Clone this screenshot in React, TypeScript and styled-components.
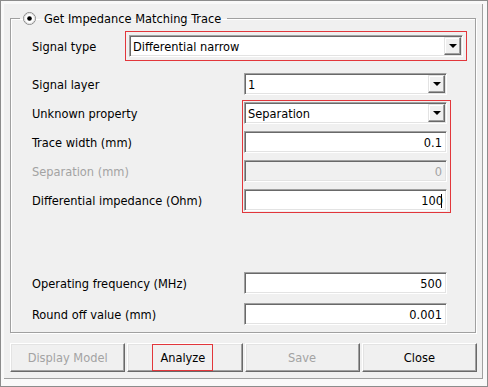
import { Fragment } from "react"
import { createGlobalStyle, styled } from "styled-components"

const GlobalStyle = createGlobalStyle`
  body {
    margin: 0;
    background: #fff;
    font-family: "DejaVu Sans Condensed", "Liberation Sans", Arial, sans-serif;
    font-size: 12.7px;
    color: #000;
  }
  * { box-sizing: border-box; }
`

const Frame = styled.div`
  width: 488px;
  height: 387px;
  border: 1px solid #8c8c8c;
  background: #f9f9f9;
  padding: 3px 4px 7px 3px;
  display: flex;
`

const Panel = styled.div`
  flex: 1;
  display: flex;
  flex-direction: column;
  background: #f0f0f0;
  border-right: 1px solid #a0a0a0;
  border-bottom: 1px solid #a0a0a0;
  padding: 6px 6px 0 6px;
`

const Group = styled.fieldset`
  margin: 0;
  padding: 0;
  border: 1px solid #a0a0a0;
  box-shadow: inset 1px 1px 0 #fff, 1px 1px 0 #fff;
  min-width: 0;
`

const Legend = styled.legend`
  margin-left: 9px;
  padding: 0 6px 0 3px;
  height: 16px;
  display: flex;
  align-items: center;
  gap: 8px;
`

const Body = styled.div`
  padding: 5px 0 7px 21px;
  display: flex;
  flex-direction: column;
`

const TypeRow = styled.div`
  display: flex;
  align-items: center;
`

const Label = styled.div<{ $width?: number; $disabled?: boolean; $row?: number }>`
  grid-column: 1;
  grid-row: ${p => p.$row ?? "auto"};
  width: ${p => (p.$width ? `${p.$width}px` : "auto")};
  color: ${p => (p.$disabled ? "#a3a3a3" : "#000")};
  white-space: nowrap;
`

const Mark = styled.div`
  border: 1px solid #e2363b;
  padding: 3px;
  width: 342px;
`

const Grid = styled.div<{ $gap: number; $top: number }>`
  display: grid;
  grid-template-columns: 212px 203px;
  grid-auto-rows: 22px;
  row-gap: ${p => p.$gap}px;
  align-items: center;
  margin-top: ${p => p.$top}px;
`

const MarkArea = styled.div`
  grid-column: 2;
  grid-row: 2 / 6;
  align-self: stretch;
  margin: -2px -4px -2px -2px;
  border: 1px solid #e2363b;
  pointer-events: none;
  z-index: 1;
`

const Field = styled.div<{ $disabled?: boolean; $row?: number }>`
  grid-column: 2;
  grid-row: ${p => p.$row ?? "auto"};
  height: 22px;
  border: 1px solid;
  border-color: #a0a0a0 #fff #fff #a0a0a0;
  box-shadow: inset 1px 1px 0 #696969, inset -1px -1px 0 #e3e3e3;
  background: ${p => (p.$disabled ? "#f0f0f0" : "#fff")};
  color: ${p => (p.$disabled ? "#a3a3a3" : "#000")};
  display: flex;
  align-items: center;
`

const Value = styled.span<{ $right?: boolean }>`
  flex: 1;
  padding: ${p => (p.$right ? "0 4px 0 0" : "0 0 0 3px")};
  text-align: ${p => (p.$right ? "right" : "left")};
  white-space: nowrap;
`

const Caret = styled.span`
  display: inline-block;
  width: 1px;
  height: 14px;
  background: #000;
  margin-left: -2px;
  vertical-align: -3px;
`

const DropButton = styled.div`
  width: 17px;
  height: 18px;
  margin-right: 1px;
  background: #f0f0f0;
  border: 1px solid;
  border-color: #e3e3e3 #696969 #696969 #e3e3e3;
  box-shadow: inset -1px -1px 0 #a0a0a0, inset 1px 1px 0 #fff;
  display: flex;
  align-items: center;
  justify-content: center;

  &::after {
    content: "";
    border-left: 4px solid transparent;
    border-right: 4px solid transparent;
    border-top: 4px solid #000;
  }
`

const Buttons = styled.div`
  display: flex;
  gap: 2px;
  margin: 10px -1px 0 0;
`

const Button = styled.div<{ $disabled?: boolean }>`
  flex: 1;
  height: 29px;
  display: flex;
  align-items: stretch;
  justify-content: center;
  background: #f0f0f0;
  border: 1px solid;
  border-color: #fff #696969 #696969 #fff;
  box-shadow: inset -1px -1px 0 #a0a0a0, inset 1px 1px 0 #e3e3e3;
  color: ${p => (p.$disabled ? "#a3a3a3" : "#000")};

  & > span {
    display: flex;
    align-items: center;
  }
`

const Analyze = styled.span`
  border: 1px solid #e2363b;
  padding: 0 7px;
  margin-right: 4px;
`

type Row = {
  label: string
  value: string
  select?: boolean
  disabled?: boolean
  caret?: boolean
}

const mainRows: Row[] = [
  { label: "Signal layer", value: "1", select: true },
  { label: "Unknown property", value: "Separation", select: true },
  { label: "Trace width (mm)", value: "0.1" },
  { label: "Separation (mm)", value: "0", disabled: true },
  { label: "Differential impedance (Ohm)", value: "100", caret: true },
]

const extraRows: Row[] = [
  { label: "Operating frequency (MHz)", value: "500" },
  { label: "Round off value (mm)", value: "0.001" },
]

function Radio() {
  return (
    <svg width="13" height="13" viewBox="0 0 13 13">
      <circle cx="6.5" cy="6.5" r="6" fill="#fff" stroke="#8a8a8a" />
      <circle cx="6.5" cy="6.5" r="5" fill="none" stroke="#dcdcdc" />
      <circle cx="6.5" cy="6.5" r="2.3" fill="#000" />
    </svg>
  )
}

function Rows({ rows }: { rows: Row[] }) {
  return (
    <>
      {rows.map((r, i) => (
        <Fragment key={r.label}>
          <Label $row={i + 1} $disabled={r.disabled}>{r.label}</Label>
          <Field $row={i + 1} $disabled={r.disabled}>
            {r.select ? (
              <>
                <Value>{r.value}</Value>
                <DropButton />
              </>
            ) : (
              <Value $right>
                {r.value}
                {r.caret && <Caret />}
              </Value>
            )}
          </Field>
        </Fragment>
      ))}
    </>
  )
}

function App() {
  return (
    <>
      <GlobalStyle />
      <Frame>
        <Panel>
          <Group>
            <Legend>
              <Radio />
              <span>Get Impedance Matching Trace</span>
            </Legend>
            <Body>
              <TypeRow>
                <Label $width={93}>Signal type</Label>
                <Mark>
                  <Field>
                    <Value>Differential narrow</Value>
                    <DropButton />
                  </Field>
                </Mark>
              </TypeRow>

              <Grid $gap={7} $top={12}>
                <Rows rows={mainRows} />
                <MarkArea />
              </Grid>

              <Grid $gap={9} $top={61}>
                <Rows rows={extraRows} />
              </Grid>
            </Body>
          </Group>

          <Buttons>
            <Button $disabled><span>Display Model</span></Button>
            <Button><Analyze>Analyze</Analyze></Button>
            <Button $disabled><span>Save</span></Button>
            <Button><span>Close</span></Button>
          </Buttons>
        </Panel>
      </Frame>
    </>
  )
}

export default App
